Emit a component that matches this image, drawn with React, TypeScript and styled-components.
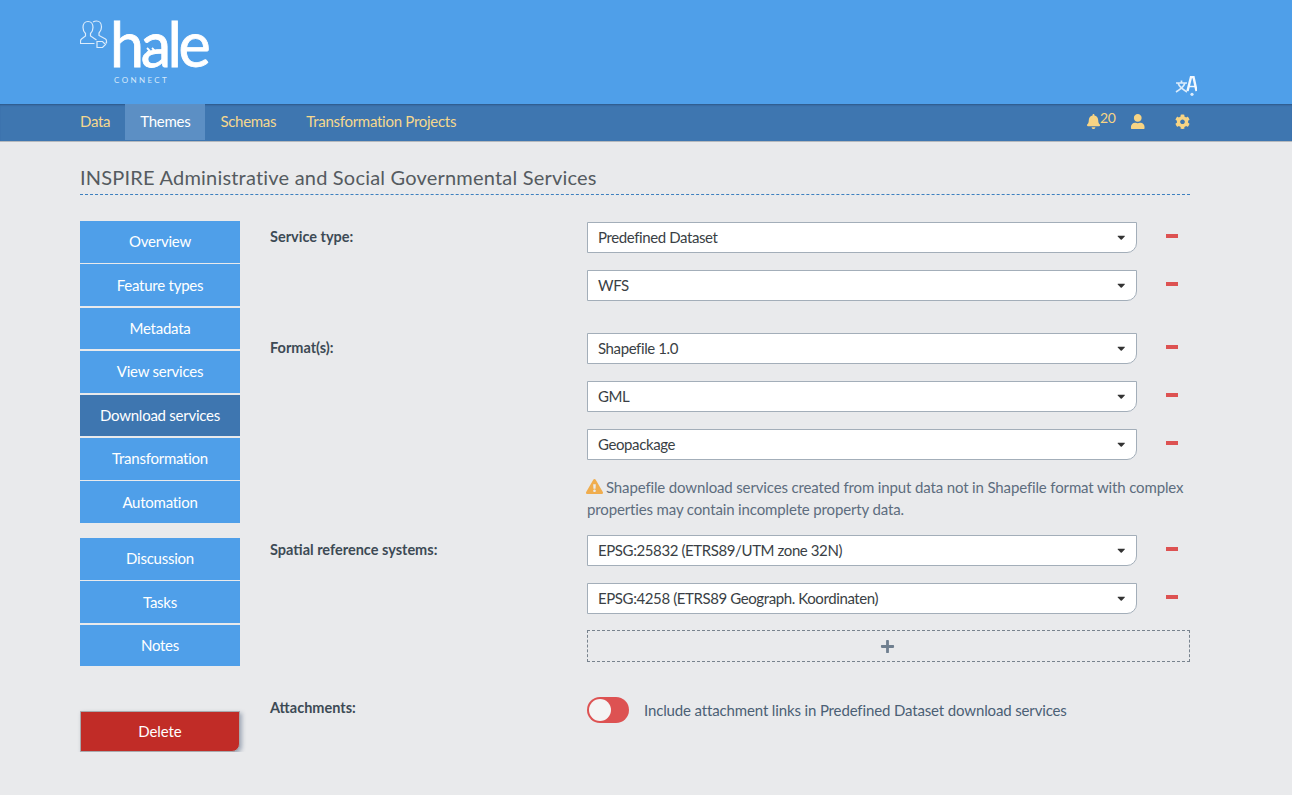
import React from "react";
import styled, { createGlobalStyle } from "styled-components";
import { FaBell, FaUser, FaCog, FaPlus, FaExclamationTriangle, FaCaretDown } from "react-icons/fa";

const GlobalStyle = createGlobalStyle`
  html, body {
    margin: 0;
    padding: 0;
    background: #e9eaec;
    font-family: "Lato", "Open Sans", sans-serif;
    font-size: 15px;
    overflow: hidden;
  }
  * { box-sizing: border-box; }
`;

const Header = styled.header`
  height: 104px;
  background: #4f9fe9;
  padding: 0 95px 0 80px;
  display: flex;
  justify-content: space-between;
`;

const Logo = styled.div`
  display: flex;
  align-items: flex-start;
  padding-top: 20px;
  color: #fff;
`;

const LogoWords = styled.div`
  display: flex;
  flex-direction: column;
`;

const LogoName = styled.span`
  position: relative;
  font-size: 61px;
  line-height: 47px;
  height: 47px;
  letter-spacing: -3.4px;
  font-weight: 400;
  -webkit-text-stroke: 0.8px #fff;
`;

const LogoSub = styled.span`
  font-size: 8px;
  line-height: 10px;
  letter-spacing: 2.4px;
  margin-top: 8px;
  margin-left: 4px;
  color: #d5e8fa;
`;

const LangButton = styled.div`
  align-self: flex-end;
  height: 20px;
  margin-bottom: 8px;
`;

const NavBar = styled.nav`
  height: 38px;
  background: #3e76b0;
  border-bottom: 1px solid #b5b9bd;
  box-shadow: inset 0 2px 2px -1px rgba(30, 60, 100, 0.55);
  padding: 0 102px 0 65px;
  display: flex;
  align-items: stretch;
  justify-content: space-between;
`;

const NavLinks = styled.div`
  display: flex;
`;

const NavLink = styled.a<{ $active?: boolean }>`
  display: flex;
  align-items: center;
  height: 36px;
  padding: 0 15px 2px;
  color: ${(p) => (p.$active ? "#fff" : "#f5d88e")};
  background: ${(p) => (p.$active ? "#5c8fc4" : "transparent")};
  font-size: 15px;
  letter-spacing: -0.28px;
`;

const NavIcons = styled.div`
  display: flex;
  align-items: center;
  color: #f7d484;
  font-size: 15px;
`;

const BellWrap = styled.span`
  display: flex;
  align-items: flex-start;
  width: 44px;
  margin-top: -3px;
`;

const BellCount = styled.span`
  font-size: 14px;
  line-height: 12px;
  margin: -2px 0 0 -1px;
  letter-spacing: -0.3px;
`;

const IconSlot = styled.span<{ $last?: boolean }>`
  display: flex;
  width: ${(p) => (p.$last ? 15 : 45)}px;
  margin-top: -2px;
  font-size: 15.5px;
`;

const Main = styled.main`
  padding: 25px 102px 0 80px;
`;

const Title = styled.h1`
  margin: 0 0 26px;
  height: 28px;
  font-size: 20px;
  line-height: 21px;
  font-weight: 400;
  letter-spacing: 0.2px;
  color: #555b60;
  border-bottom: 1px dashed #3e80bf;
`;

const Columns = styled.div`
  display: flex;
  gap: 30px;
`;

const Sidebar = styled.aside`
  width: 160px;
  flex: none;
  display: flex;
  flex-direction: column;
`;

const SideGroup = styled.div`
  display: flex;
  flex-direction: column;
  gap: 1.8px;
  margin-bottom: 15px;
`;

const SideItem = styled.a<{ $active?: boolean }>`
  display: flex;
  align-items: center;
  justify-content: center;
  height: 41.6px;
  padding-bottom: 1px;
  background: ${(p) => (p.$active ? "#3e76b0" : "#4f9fe9")};
  color: #fff;
  font-size: 15px;
  letter-spacing: -0.25px;
`;

const DeleteButton = styled.button`
  height: 41px;
  margin-top: 30px;
  padding-bottom: 3px;
  background: #c12c27;
  color: #fff;
  border: 1px solid #a9a9ad;
  border-radius: 0 0 8px 0;
  box-shadow: 2px 2px 4px rgba(70, 90, 120, 0.45);
  font: inherit;
  font-size: 15px;
  letter-spacing: -0.1px;
`;

const Form = styled.div`
  flex: 1;
  display: flex;
  flex-direction: column;
  padding-top: 1px;
`;

const Section = styled.section<{ $gap?: number }>`
  display: grid;
  grid-template-columns: 317px 1fr;
  margin-bottom: ${(p) => p.$gap ?? 0}px;
`;

const Label = styled.div`
  font-weight: 700;
  font-size: 14.5px;
  line-height: 29px;
  color: #3d4a55;
`;

const Rows = styled.div`
  display: flex;
  flex-direction: column;
  gap: 17px;
`;

const Row = styled.div`
  display: flex;
  align-items: center;
`;

const Select = styled.div`
  width: 550px;
  height: 31px;
  padding: 0 9px 2px 10px;
  display: flex;
  align-items: center;
  justify-content: space-between;
  background: #fff;
  border: 1px solid #a3aeb9;
  border-radius: 0 0 10px 0;
  color: #3a3f45;
  font-size: 15px;
  letter-spacing: -0.4px;
`;

const Caret = styled(FaCaretDown)`
  font-size: 12.5px;
  margin-top: 2px;
  color: #333;
`;

const Minus = styled.span`
  width: 12px;
  height: 4px;
  margin: -3px 0 0 29px;
  background: #dd5252;
`;

const Warning = styled.p`
  width: 603px;
  margin: 16px 0 15px;
  line-height: 22px;
  font-size: 15px;
  letter-spacing: -0.14px;
  color: #5d6d7e;
  svg {
    color: #f0ad4e;
    font-size: 17px;
    vertical-align: -2px;
    margin: 0 3px 0 -1px;
  }
`;

const AddBox = styled.div`
  width: 603px;
  height: 32px;
  margin-top: -1px;
  display: flex;
  align-items: center;
  justify-content: center;
  border: 1px dashed #78838e;
  color: #6f7f8f;
  font-size: 15px;
  svg {
    margin-left: -3px;
  }
`;

const ToggleRow = styled.div`
  display: flex;
  align-items: center;
  gap: 15px;
  margin-top: 4px;
  color: #4b6075;
  font-size: 15px;
  letter-spacing: -0.14px;
`;

const Toggle = styled.span`
  position: relative;
  display: block;
  width: 42px;
  height: 26px;
  border-radius: 13px;
  background: #dd5252;
  &::after {
    content: "";
    position: absolute;
    left: 2px;
    top: 2px;
    width: 22px;
    height: 22px;
    border-radius: 50%;
    background: #f4f4f4;
  }
`;

const sideTop = ["Overview", "Feature types", "Metadata", "View services", "Download services", "Transformation", "Automation"];
const sideBottom = ["Discussion", "Tasks", "Notes"];

const Choice = ({ value }: { value: string }) => (
  <Row>
    <Select>
      {value}
      <Caret />
    </Select>
    <Minus />
  </Row>
);

const PeopleMark = () => (
  <svg width="30" height="30" viewBox="0 0 30 30" fill="none" stroke="#dcecfb" strokeWidth="1.2">
    <path d="M8 1.500c-3 0-5 2.500-5 6 0 2.500 1 4.500 2.500 6v2.500L1.500 19c-.8.600-1 1.500-1 2.500v2h14" />
    <path d="M8 1.500c3 0 5 2.500 5 6 0 2.500-1 4.500-2.500 6v2.500l6 4" />
    <path d="M13 2c1-.6 2-1 3.500-1 3 0 5 2.500 5 6 0 2.500-1 4.500-2.500 6v2.500l6.500 3.500c.8.500 1 1.300 1 2.300v1.500h-1" />
    <path d="M17 21.500h5.500l3 3-3 3H17z" />
  </svg>
);

const ChevronMark = styled.svg`
  position: absolute;
  left: 36px;
  top: 27px;
`;

const TranslateIcon = () => (
  <svg width="22" height="20" viewBox="0 0 22 20" fill="none" stroke="#dcecfb" strokeWidth="1.700">
    <path d="M1 7h11M6.500 4.500V7M3 7c1 3 4 6 9 9M10 7c-1 3-4 6-9 9" />
    <path d="M12.500 15L16 1h2.500L21.500 15" strokeWidth="2.400" stroke="#f2f8fe" />
    <path d="M14 10.500h6" strokeWidth="1.500" stroke="#f2f8fe" />
    <circle cx="17" cy="18.300" r="1.600" stroke="none" fill="#dcecfb" />
  </svg>
);

export default function App() {
  return (
    <>
      <GlobalStyle />
      <Header>
        <Logo>
          <PeopleMark />
          <LogoWords>
            <LogoName>
              hale
              <ChevronMark width="12" height="7" viewBox="0 0 12 7" fill="none" stroke="#fff" strokeWidth="1.800">
                <path d="M1 1l2.500 2.500L1 6M6 1l2.500 2.500L6 6" />
              </ChevronMark>
            </LogoName>
            <LogoSub>CONNECT</LogoSub>
          </LogoWords>
        </Logo>
        <LangButton>
          <TranslateIcon />
        </LangButton>
      </Header>
      <NavBar>
        <NavLinks>
          <NavLink>Data</NavLink>
          <NavLink $active>Themes</NavLink>
          <NavLink>Schemas</NavLink>
          <NavLink>Transformation Projects</NavLink>
        </NavLinks>
        <NavIcons>
          <BellWrap>
            <FaBell />
            <BellCount>20</BellCount>
          </BellWrap>
          <IconSlot>
            <FaUser />
          </IconSlot>
          <IconSlot $last>
            <FaCog />
          </IconSlot>
        </NavIcons>
      </NavBar>
      <Main>
        <Title>INSPIRE Administrative and Social Governmental Services</Title>
        <Columns>
          <Sidebar>
            <SideGroup>
              {sideTop.map((name) => (
                <SideItem key={name} $active={name === "Download services"}>
                  {name}
                </SideItem>
              ))}
            </SideGroup>
            <SideGroup>
              {sideBottom.map((name) => (
                <SideItem key={name}>{name}</SideItem>
              ))}
            </SideGroup>
            <DeleteButton>Delete</DeleteButton>
          </Sidebar>
          <Form>
            <Section $gap={32}>
              <Label>Service type:</Label>
              <Rows>
                <Choice value="Predefined Dataset" />
                <Choice value="WFS" />
              </Rows>
            </Section>
            <Section>
              <Label>Format(s):</Label>
              <div>
                <Rows>
                  <Choice value="Shapefile 1.0" />
                  <Choice value="GML" />
                  <Choice value="Geopackage" />
                </Rows>
                <Warning>
                  <FaExclamationTriangle />
                  Shapefile download services created from input data not in Shapefile format with complex properties may contain incomplete property data.
                </Warning>
              </div>
            </Section>
            <Section $gap={31}>
              <Label>Spatial reference systems:</Label>
              <Rows>
                <Choice value="EPSG:25832 (ETRS89/UTM zone 32N)" />
                <Choice value="EPSG:4258 (ETRS89 Geograph. Koordinaten)" />
                <AddBox>
                  <FaPlus />
                </AddBox>
              </Rows>
            </Section>
            <Section>
              <Label>Attachments:</Label>
              <ToggleRow>
                <Toggle />
                Include attachment links in Predefined Dataset download services
              </ToggleRow>
            </Section>
          </Form>
        </Columns>
      </Main>
    </>
  );
}
